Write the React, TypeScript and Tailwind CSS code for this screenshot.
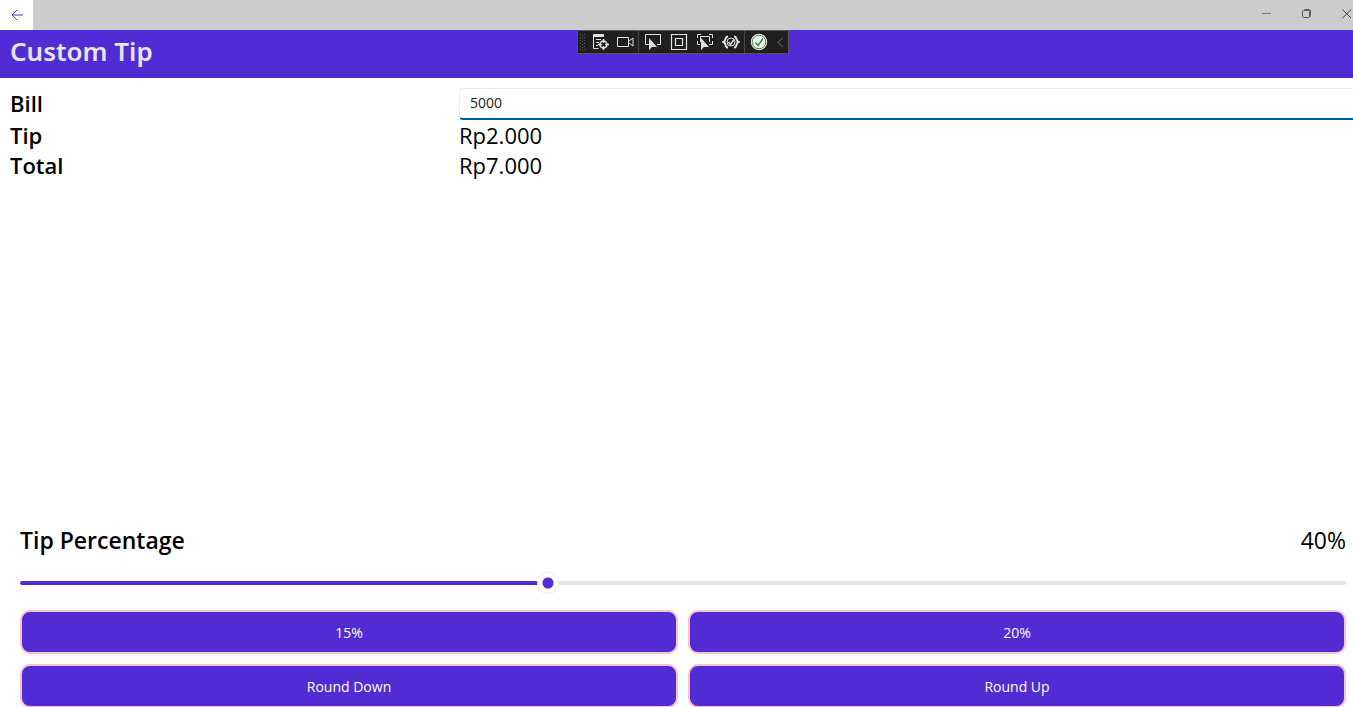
import { useState, type ReactNode } from "react";

type ToolProps = { label: string; children: ReactNode };

function Tool({ label, children }: ToolProps) {
  return (
    <button type="button" aria-label={label} className="flex h-5 min-w-6 flex-1 items-center justify-center">
      <svg width="18" height="18" viewBox="0 0 18 18" fill="none" stroke="#e0e0e0">
        {children}
      </svg>
    </button>
  );
}

function Separator() {
  return <span className="mr-px h-full w-px shrink-0 bg-[#444444]" />;
}

const cursor = "M0 0v12l3-3h5z";

function DebugToolbar() {
  return (
    <div className="absolute left-1/2 top-0 flex h-6 w-[212px] -translate-x-[100px] items-center border border-[#555555] bg-[#1f1f1f]">
      <svg width="10" height="18" viewBox="0 0 10 18" fill="#555555" className="shrink-0">
        {[1, 4, 7, 10, 13, 16].map((y) => (
          <path key={y} d={`M2 ${y}h1v1h-1zM6 ${y}h1v1h-1zM4 ${y + 1}h1v1h-1z`} />
        ))}
      </svg>
      <div className="flex w-[50px] shrink-0">
        <Tool label="Go to Live Visual Tree">
          <path d="M2.500 2v13.500h5M5 6.500h5M5 9.500h3M5 12.500h2" />
          <path d="M2.500 1.500h10v2h-10z" fill="#e0e0e0" />
          <circle cx="12.500" cy="11.500" r="3.500" strokeWidth="1.500" />
          <path d="M12.500 6v4M12.500 13v4M7 11.500h4M14 11.500h4" strokeWidth="1.500" />
        </Tool>
        <Tool label="Show in XAML Live Preview">
          <path d="M1.500 4.500h11v9h-11zM13 8l4-3v8l-4-3" />
        </Tool>
      </div>
      <Separator />
      <div className="flex w-[104px] shrink-0">
        <Tool label="Select Element">
          <path d="M5 11.500H1.500v-10h15v10H13" />
          <path d={cursor} transform="translate(5 5)" fill="#e0e0e0" stroke="none" />
        </Tool>
        <Tool label="Display Layout Adorners">
          <path d="M1.500 1.500h15v15h-15zM5.500 5.500h7v7h-7z" strokeWidth="1.200" />
        </Tool>
        <Tool label="Track Focused Element">
          <path d="M1.500 5V1.500H5M13 1.500h3.500V5M16.500 8v3.500H13M4 11.500H1.500V8M4.500 9V3.500h9V9" />
          <path d={cursor} transform="translate(5 5)" fill="#e0e0e0" stroke="none" />
        </Tool>
        <Tool label="Binding Failures">
          <path d="M6 3.500C2.500 3.500 4.500 8 1.500 9c3 1 1 5.500 4.500 5.500M12 3.500c3.500 0 1.500 4.500 4.500 5.500-3 1-1 5.500-4.500 5.500" strokeWidth="2" />
          <circle cx="9" cy="9" r="4" />
          <path d="M6.500 9l2 2.500 3.500-5" strokeWidth="1.500" />
        </Tool>
      </div>
      <Separator />
      <div className="flex w-[26px] shrink-0">
        <Tool label="Hot Reload">
          <circle cx="9" cy="9" r="8.200" fill="#f0f0f0" stroke="none" />
          <circle cx="9" cy="9" r="6.800" stroke="#389438" />
          <path d="M5.500 9.500l2.500 3 5-7" stroke="#389438" strokeWidth="1.500" />
        </Tool>
      </div>
      <button type="button" aria-label="Collapse toolbar" className="flex h-5 w-4 items-center justify-center">
        <svg width="8" height="12" viewBox="0 0 8 12" fill="none" stroke="#777777">
          <path d="M6.500 2L2 6.500l4.500 4.500" />
        </svg>
      </button>
    </div>
  );
}

function WindowBar() {
  return (
    <div className="flex h-[30px] shrink-0 items-start justify-between bg-[#cccccc]">
      <button type="button" aria-label="Back" className="flex h-[30px] w-[33px] items-center justify-center bg-white">
        <svg width="12" height="12" viewBox="0 0 12 12" fill="none" stroke="#512bd4">
          <path d="M12 6H1M6 1L1 6l5 5" />
        </svg>
      </button>
      <div className="-mr-3.5 flex h-7 items-center">
        <button type="button" aria-label="Minimize" className="flex w-10 items-center justify-center">
          <svg width="10" height="10" viewBox="0 0 10 10" stroke="#777777"><path d="M0 4.500h9" /></svg>
        </button>
        <button type="button" aria-label="Restore" className="flex w-10 items-center justify-center">
          <svg width="10" height="10" viewBox="0 0 10 10" fill="none" stroke="#555555">
            <rect x="0.500" y="1.500" width="7" height="7" rx="1" />
            <path d="M2 1Q2.500 0.500 3.500 0.500H7Q8.500 0.500 8.500 2v4.500Q8.500 7.500 8 8" />
          </svg>
        </button>
        <button type="button" aria-label="Close" className="flex w-10 items-center justify-center">
          <svg width="10" height="10" viewBox="0 0 10 10" stroke="#444444"><path d="M0.500 0.500l8.500 8.500M9 0.500l-8.500 8.500" /></svg>
        </button>
      </div>
    </div>
  );
}

function ActionButton({ children, onClick }: { children: ReactNode; onClick: () => void }) {
  return (
    <button
      type="button"
      onClick={onClick}
      className="h-11 rounded-[10px] border-2 border-[#ffc0cb] bg-[#512bd4] pt-0.5 text-sm text-white"
    >
      {children}
    </button>
  );
}

const rupiah = (value: number) => "Rp" + Math.round(value).toString().replace(/\B(?=(\d{3})+$)/g, ".");

export default function App() {
  const [bill, setBill] = useState("5000");
  const [percent, setPercent] = useState(39.7);
  const [rounding, setRounding] = useState<"none" | "up" | "down">("none");

  const amount = Number(bill) || 0;
  const shown = Math.round(percent);
  const tip = (amount * shown) / 100;
  const rawTotal = amount + tip;
  const total =
    rounding === "up" ? Math.ceil(rawTotal / 1000) * 1000 : rounding === "down" ? Math.floor(rawTotal / 1000) * 1000 : rawTotal;

  const choose = (value: number) => {
    setPercent(value);
    setRounding("none");
  };

  return (
    <div className="flex h-screen flex-col overflow-hidden bg-white font-['Open_Sans',sans-serif] text-black">
      <WindowBar />
      <header className="relative h-12 shrink-0 bg-[#512bd4] px-2.5">
        <h1 className="font-['Noto_Sans','Open_Sans',sans-serif] text-[26px] font-semibold leading-[42px] text-[#e5e5e1]">Custom Tip</h1>
        <DebugToolbar />
      </header>
      <main className="flex min-h-0 grow flex-col justify-between">
        <div className="-mr-1 grid grid-cols-[1fr_2fr] pl-2.5 pt-2.5 text-[22px] leading-[30px]">
          <label htmlFor="bill" className="font-semibold">Bill</label>
          <input
            id="bill"
            inputMode="numeric"
            value={bill}
            onChange={(e) => setBill(e.target.value)}
            className="h-8 min-w-0 rounded border border-b-2 border-[#ececec] border-b-[#005a9e] bg-white px-2.5 pb-0.5 text-sm text-[#1a1a1a] outline-none"
          />
          <span className="font-semibold">Tip</span>
          <output htmlFor="bill tip">{rupiah(tip)}</output>
          <span className="font-semibold">Total</span>
          <output htmlFor="bill tip">{rupiah(total)}</output>
        </div>
        <section className="-mb-px flex flex-col pl-5 pr-[7px]">
          <div className="flex justify-between text-[23px] leading-8">
            <label htmlFor="tip" className="font-semibold">Tip Percentage</label>
            <output htmlFor="tip">{shown}%</output>
          </div>
          <input
            id="tip"
            type="range"
            min="0"
            max="100"
            step="0.1"
            value={percent}
            onChange={(e) => choose(Number(e.target.value))}
            style={{ backgroundImage: `linear-gradient(to right, #512bd4 ${percent}%, #e4e4e0 ${percent}%)` }}
            className="mb-[25px] mt-[25px] h-1 w-full appearance-none rounded-full outline-none [&::-webkit-slider-thumb]:size-5 [&::-webkit-slider-thumb]:appearance-none [&::-webkit-slider-thumb]:rounded-full [&::-webkit-slider-thumb]:bg-[radial-gradient(circle,#512bd4_5px,white_6px)] [&::-webkit-slider-thumb]:shadow-[0_0_0_1px_#f0f0f0,0_1px_0_0_#d0d0d0]"
          />
          <div className="grid grid-cols-2 gap-2.5">
            <ActionButton onClick={() => choose(15)}>15%</ActionButton>
            <ActionButton onClick={() => choose(20)}>20%</ActionButton>
            <ActionButton onClick={() => setRounding("down")}>Round Down</ActionButton>
            <ActionButton onClick={() => setRounding("up")}>Round Up</ActionButton>
          </div>
        </section>
      </main>
    </div>
  );
}
